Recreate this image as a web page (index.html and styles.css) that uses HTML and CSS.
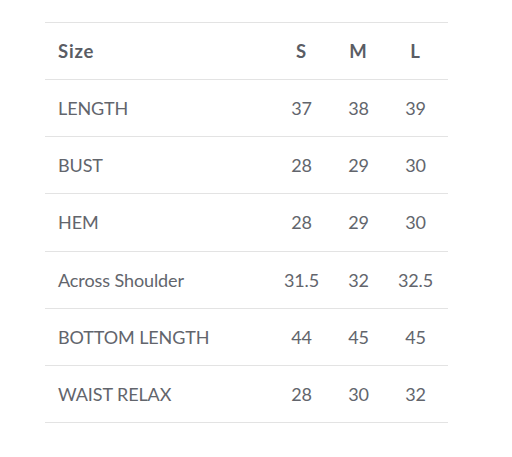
FILE: index.html
```html
<!DOCTYPE html>
<html>
<head>
<meta charset="utf-8">
<link rel="stylesheet" href="styles.css">
</head>
<body>
<table class="size-table">
  <thead>
    <tr><th class="label">Size</th><th>S</th><th>M</th><th>L</th><th class="pad"></th></tr>
  </thead>
  <tbody>
    <tr><td class="label">LENGTH</td><td>37</td><td>38</td><td>39</td><td class="pad"></td></tr>
    <tr><td class="label">BUST</td><td>28</td><td>29</td><td>30</td><td class="pad"></td></tr>
    <tr><td class="label">HEM</td><td>28</td><td>29</td><td>30</td><td class="pad"></td></tr>
    <tr><td class="label">Across Shoulder</td><td>31.5</td><td>32</td><td>32.5</td><td class="pad"></td></tr>
    <tr><td class="label">BOTTOM LENGTH</td><td>44</td><td>45</td><td>45</td><td class="pad"></td></tr>
    <tr><td class="label">WAIST RELAX</td><td>28</td><td>30</td><td>32</td><td class="pad"></td></tr>
  </tbody>
</table>
</body>
</html>
```
FILE: styles.css
```css
html, body {
  margin: 0;
  padding: 0;
  background: #ffffff;
}
body {
  padding: 22px 0 0 45px;
  font-family: Lato, "Open Sans", sans-serif;
  color: #62656c;
}
.size-table {
  border-collapse: collapse;
  table-layout: fixed;
  width: 403px;
  border-top: 1px solid #e3e3e3;
}
.size-table tr {
  height: 57.15px;
  border-bottom: 1px solid #e3e3e3;
}
.size-table th,
.size-table td {
  padding: 0;
  text-align: center;
  font-size: 18px;
  width: 57px;
  vertical-align: middle;
}
.size-table th {
  font-weight: 700;
  font-size: 18.5px;
  letter-spacing: 0.8px;
  color: #5a5d64;
}
.size-table .label {
  width: 215px;
  padding-left: 13px;
  text-align: left;
}
.size-table .pad {
  width: 4px;
}
.size-table td {
  font-weight: 400;
  letter-spacing: -0.1px;
}
```
